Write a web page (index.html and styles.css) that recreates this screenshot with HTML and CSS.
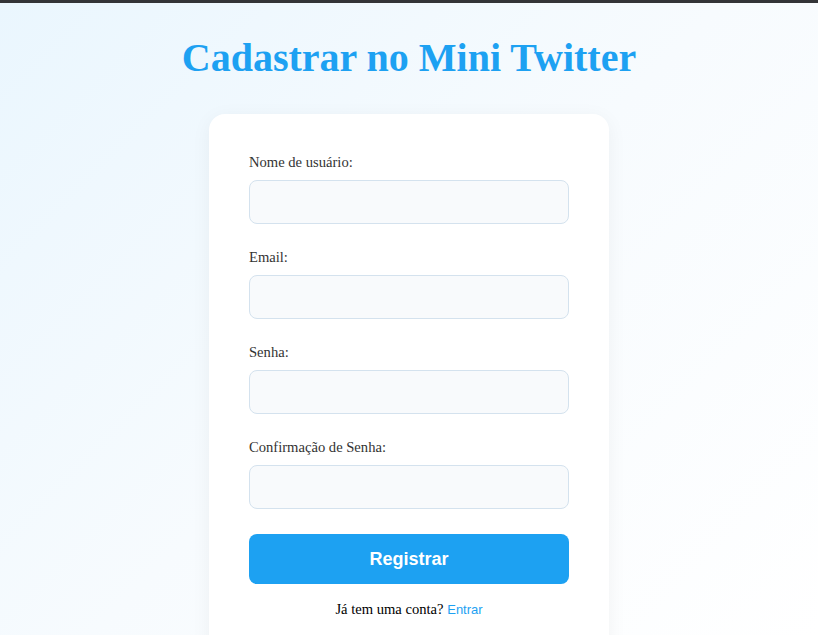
FILE: index.html
```html
<!DOCTYPE html>
<html lang="pt">
<head>
<meta charset="utf-8">
<title>Cadastrar no Mini Twitter</title>
<link rel="stylesheet" href="styles.css">
</head>
<body>
<div class="topbar"></div>
<main class="page">
  <h1 class="title">Cadastrar no Mini Twitter</h1>
  <div class="card">
    <form class="form">
      <div class="group">
        <label class="label" for="u">Nome de usuário:</label>
        <input class="input" id="u" type="text">
      </div>
      <div class="group">
        <label class="label" for="e">Email:</label>
        <input class="input" id="e" type="email">
      </div>
      <div class="group">
        <label class="label" for="s">Senha:</label>
        <input class="input" id="s" type="password">
      </div>
      <div class="group">
        <label class="label" for="c">Confirmação de Senha:</label>
        <input class="input" id="c" type="password">
      </div>
      <button class="button" type="button">Registrar</button>
      <p class="footer">Já tem uma conta? <a class="link" href="#">Entrar</a></p>
    </form>
  </div>
</main>
</body>
</html>
```
FILE: styles.css
```css
html, body {
  margin: 0;
  padding: 0;
  height: 100%;
}
body {
  font-family: "Liberation Serif", serif;
  background: linear-gradient(135deg, #eaf6fe 0%, #f7fbfe 50%, #ffffff 100%);
  overflow: hidden;
}
.topbar {
  height: 3px;
  background: #333437;
}
.page {
  display: flex;
  flex-direction: column;
  align-items: center;
}
.title {
  font-family: "Liberation Serif", serif;
  font-weight: bold;
  font-size: 40px;
  line-height: 48px;
  color: #1da1f2;
  margin: 31px 0 32px;
}
.card {
  width: 320px;
  padding: 40px;
  background: #fff;
  border-radius: 16px;
  box-shadow: 0 4px 20px rgba(0, 0, 0, 0.05);
}
.form {
  display: flex;
  flex-direction: column;
}
.group {
  display: flex;
  flex-direction: column;
  margin-bottom: 25px;
}
.label {
  font-size: 14.6px;
  line-height: 16px;
  color: #333;
  margin-bottom: 10px;
}
.input {
  box-sizing: border-box;
  height: 44px;
  width: 100%;
  border: 1px solid #d4e2ee;
  border-radius: 8px;
  background: #f8fafc;
  padding: 0 12px;
  font-size: 16px;
  outline: none;
}
.button {
  height: 50px;
  border: none;
  border-radius: 8px;
  background: #1da1f2;
  color: #fff;
  font-family: "Liberation Sans", Arial, sans-serif;
  font-weight: bold;
  font-size: 18px;
  cursor: pointer;
}
.footer {
  margin: 17px 0 0;
  text-align: center;
  font-size: 14.6px;
  line-height: 16px;
  color: #000;
}
.link {
  font-family: "Liberation Sans", Arial, sans-serif;
  font-size: 13px;
  color: #1da1f2;
  text-decoration: none;
}
```
